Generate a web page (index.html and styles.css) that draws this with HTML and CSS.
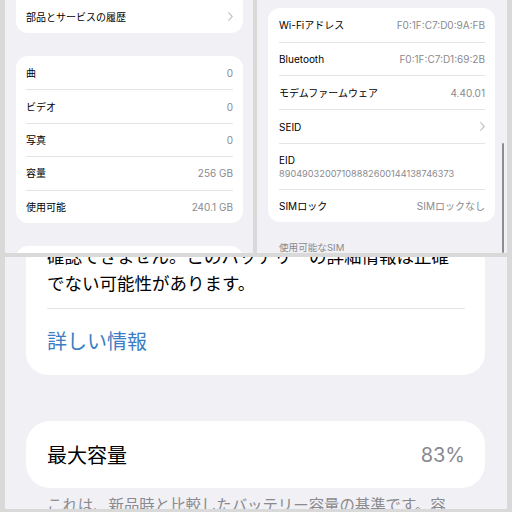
FILE: index.html
```html
<!DOCTYPE html>
<html lang="ja">
<head>
  <meta charset="UTF-8">
  <meta name="viewport" content="width=device-width, initial-scale=1.0">
  <title>情報</title>
  <link rel="stylesheet" href="styles.css">
</head>
<body>
  <div class="collage">

    <!-- about: storage -->
    <section class="shot shot-about">
      <div class="group group-top">
        <div class="row">
          <span class="label">部品とサービスの履歴</span>
          <svg class="chev" width="5" height="9" viewBox="0 0 5 9"><polyline points="0.7,0.7 4.2,4.5 0.7,8.3" /></svg>
        </div>
      </div>
      <div class="group">
        <div class="row"><span class="label">曲</span><span class="value">0</span></div>
        <div class="row"><span class="label">ビデオ</span><span class="value">0</span></div>
        <div class="row"><span class="label">写真</span><span class="value">0</span></div>
        <div class="row"><span class="label">容量</span><span class="value">256 GB</span></div>
        <div class="row"><span class="label">使用可能</span><span class="value">240.1 GB</span></div>
      </div>
      <div class="group group-cut"></div>
    </section>

    <!-- about: network -->
    <section class="shot shot-network">
      <div class="group">
        <div class="row row-34"><span class="label">Wi-Fiアドレス</span><span class="value">F0:1F:C7:D0:9A:FB</span></div>
        <div class="row row-33"><span class="label">Bluetooth</span><span class="value">F0:1F:C7:D1:69:2B</span></div>
        <div class="row row-34"><span class="label">モデムファームウェア</span><span class="value">4.40.01</span></div>
        <div class="row row-34">
          <span class="label">SEID</span>
          <svg class="chev" width="5" height="9" viewBox="0 0 5 9"><polyline points="0.7,0.7 4.2,4.5 0.7,8.3" /></svg>
        </div>
        <div class="row row-stack">
          <span class="label">EID</span>
          <span class="eid">89049032007108882600144138746373</span>
        </div>
        <div class="row row-33"><span class="label">SIMロック</span><span class="value">SIMロックなし</span></div>
      </div>
      <p class="section-title">使用可能なSIM</p>
      <div class="scroll-indicator"></div>
    </section>

    <!-- battery -->
    <section class="shot shot-battery">
      <div class="card card-note">
        <p class="note">確認できません。このバッテリーの詳細情報は正確<br>でない可能性があります。</p>
        <a class="more">詳しい情報</a>
      </div>
      <div class="card card-capacity">
        <span>最大容量</span>
        <span class="value">83%</span>
      </div>
      <p class="footnote">これは、新品時と比較したバッテリー容量の基準です。容量が少ないと</p>
    </section>

  </div>
</body>
</html>
```

FILE: styles.css
```css
body {
  margin: 0;
  background: #d9d9d9;
  font-family: Inter, "Noto Sans CJK JP", sans-serif;
  color: #000;
}

.collage {
  width: 512px;
  height: 512px;
  box-sizing: border-box;
  padding: 0 5px 3px 5px;
  display: grid;
  grid-template-columns: 248px 250px;
  grid-template-rows: 253px 252px;
  gap: 4px;
}

.shot {
  background: #f0f0f5;
  overflow: hidden;
  box-sizing: border-box;
}

.group {
  background: #fff;
  border-radius: 12px;
}

.row {
  display: flex;
  align-items: center;
  justify-content: space-between;
  border-top: 1px solid #e4e4e7;
  font-size: 10px;
  line-height: 12px;
}

.row:first-child {
  border-top: none;
}

.value {
  color: #8a8a8e;
}

.chev {
  fill: none;
  stroke: #c4c4c8;
  stroke-width: 1.2;
  stroke-linecap: round;
  stroke-linejoin: round;
}

/* left shot */
.shot-about {
  padding: 0 10px 0 11px;
}

.shot-about .row {
  height: 33.4px;
  margin: 0 10px;
  box-sizing: border-box;
}

.group-top {
  border-radius: 0 0 12px 12px;
  margin-bottom: 23px;
}

.group-top .row {
  height: 33px;
}

.group-cut {
  margin-top: 23px;
  height: 30px;
}

/* right shot */
.shot-network {
  position: relative;
  padding: 8px 12px 0 11px;
}

.shot-network .row {
  margin: 0 10px 0 11px;
  box-sizing: border-box;
}

.row-34 {
  height: 34px;
}

.row-33 {
  height: 33px;
}

.row-stack {
  flex-direction: column;
  align-items: flex-start;
  justify-content: flex-start;
  gap: 2px;
  padding: 10px 0;
  height: 46px;
}

.eid {
  font-size: 9.2px;
  color: #8a8a8e;
}

.section-title {
  margin: 20px 0 0 0;
  padding-left: 11px;
  font-size: 9.6px;
  line-height: 12px;
  color: #8a8a8e;
}

.scroll-indicator {
  position: absolute;
  right: 3px;
  top: 143px;
  width: 2.5px;
  height: 110px;
  border-radius: 2px;
  background: #8e8e90;
}

/* bottom shot */
.shot-battery {
  grid-column: span 2;
  padding: 0 22px 0 21px;
}

.card {
  background: #fff;
  border-radius: 22px;
}

.card-note {
  margin-top: -14px;
  border-radius: 0 0 22px 22px;
}

.note {
  margin: 0 0 11px 0;
  padding: 0 20px 0 21px;
  font-size: 17.5px;
  line-height: 27px;
}

.more {
  display: block;
  margin: 0 20px 0 21px;
  padding: 23px 0;
  border-top: 1px solid #e4e4e7;
  font-size: 20px;
  line-height: 20px;
  color: #3b7dc4;
}

.card-capacity {
  margin-top: 46px;
  height: 67px;
  padding: 0 20px 0 21px;
  display: flex;
  align-items: center;
  justify-content: space-between;
  font-size: 20px;
  border-radius: 24px;
}

.footnote {
  margin: 8px 0 0 0;
  padding: 0 30px 0 21px;
  font-size: 15.4px;
  line-height: 20px;
  color: #8a8a8e;
}
```
